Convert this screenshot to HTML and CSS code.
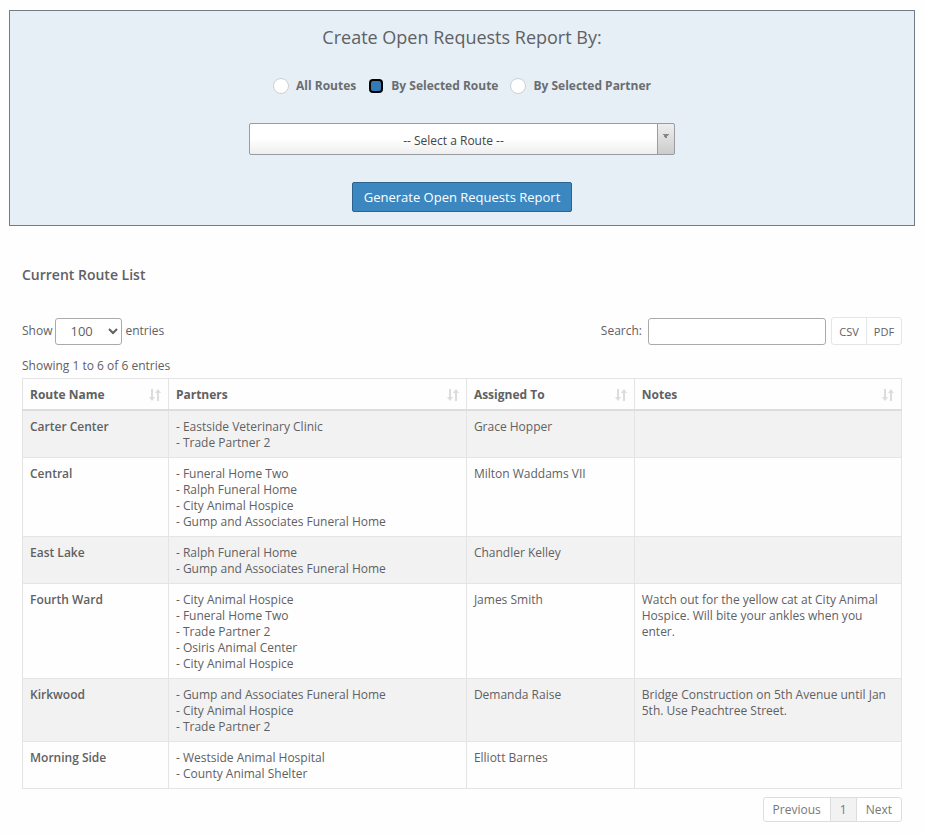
FILE: index.html
```html
<!DOCTYPE html>
<html lang="en">
<head>
  <meta charset="UTF-8" />
  <meta name="viewport" content="width=device-width, initial-scale=1.0"/>
  <title>Open Requests Report</title>
  <link rel="stylesheet" href="styles.css">
</head>
<body>

  <!-- sort arrows, reused in every column header -->
  <svg class="sprite" width="0" height="0" aria-hidden="true">
    <symbol id="sort" viewBox="0 0 12 14">
      <path d="M2 1h2v8h2L3 13L0 9h2zM8 13h2V5h2L9 1L6 5h2z"/>
    </symbol>
  </svg>

  <form class="report-box">
    <h1>Create Open Requests Report By:</h1>

    <div class="radio-row">
      <label><input type="radio" name="reportBy" value="all">All Routes</label>
      <label><input type="radio" name="reportBy" value="route" checked>By Selected Route</label>
      <label><input type="radio" name="reportBy" value="partner">By Selected Partner</label>
    </div>

    <select class="route-select" aria-label="Route">
      <option>-- Select a Route --</option>
      <option>Carter Center</option>
      <option>Central</option>
      <option>East Lake</option>
      <option>Fourth Ward</option>
      <option>Kirkwood</option>
      <option>Morning Side</option>
    </select>

    <button type="button" class="generate-btn">Generate Open Requests Report</button>
  </form>

  <div class="route-list">
    <h2>Current Route List</h2>

    <div class="toolbar">
      <label class="length">Show
        <select class="length-select">
          <option>10</option>
          <option>25</option>
          <option>50</option>
          <option selected>100</option>
        </select>
        entries
      </label>
      <div class="toolbar-right">
        <label class="search">Search: <input type="search"></label>
        <div class="export">
          <button type="button">CSV</button>
          <button type="button">PDF</button>
        </div>
      </div>
    </div>

    <div class="info">Showing 1 to 6 of 6 entries</div>

    <table>
      <colgroup>
        <col class="col-name">
        <col class="col-partners">
        <col class="col-assigned">
        <col class="col-notes">
      </colgroup>
      <thead>
        <tr>
          <th><div class="head">Route Name <svg class="sort"><use href="#sort"/></svg></div></th>
          <th><div class="head">Partners <svg class="sort"><use href="#sort"/></svg></div></th>
          <th><div class="head">Assigned To <svg class="sort"><use href="#sort"/></svg></div></th>
          <th><div class="head">Notes <svg class="sort"><use href="#sort"/></svg></div></th>
        </tr>
      </thead>
      <tbody>
        <tr>
          <td class="name">Carter Center</td>
          <td>- Eastside Veterinary Clinic<br>- Trade Partner 2</td>
          <td>Grace Hopper</td>
          <td></td>
        </tr>
        <tr>
          <td class="name">Central</td>
          <td>- Funeral Home Two<br>- Ralph Funeral Home<br>- City Animal Hospice<br>- Gump and Associates Funeral Home</td>
          <td>Milton Waddams VII</td>
          <td></td>
        </tr>
        <tr>
          <td class="name">East Lake</td>
          <td>- Ralph Funeral Home<br>- Gump and Associates Funeral Home</td>
          <td>Chandler Kelley</td>
          <td></td>
        </tr>
        <tr>
          <td class="name">Fourth Ward</td>
          <td>- City Animal Hospice<br>- Funeral Home Two<br>- Trade Partner 2<br>- Osiris Animal Center<br>- City Animal Hospice</td>
          <td>James Smith</td>
          <td>Watch out for the yellow cat at City Animal Hospice. Will bite your ankles when you enter.</td>
        </tr>
        <tr>
          <td class="name">Kirkwood</td>
          <td>- Gump and Associates Funeral Home<br>- City Animal Hospice<br>- Trade Partner 2</td>
          <td>Demanda Raise</td>
          <td>Bridge Construction on 5th Avenue until Jan 5th. Use Peachtree Street.</td>
        </tr>
        <tr>
          <td class="name">Morning Side</td>
          <td>- Westside Animal Hospital<br>- County Animal Shelter</td>
          <td>Elliott Barnes</td>
          <td></td>
        </tr>
      </tbody>
    </table>

    <div class="pagination">
      <button type="button">Previous</button>
      <button type="button" class="active">1</button>
      <button type="button">Next</button>
    </div>
  </div>

</body>
</html>
```

FILE: styles.css
```css
* {
  box-sizing: border-box;
}

body {
  margin: 0;
  padding: 10px 10px 12px 9px;
  font-family: "Open Sans", sans-serif;
  font-size: 12px;
  line-height: 16px;
  color: #5f6163;
  background: #fefefe;
}

button, input, select {
  font-family: inherit;
  font-size: 12px;
  color: inherit;
}

.sprite {
  display: block;
}

/* report form */
.report-box {
  display: flex;
  flex-direction: column;
  align-items: center;
  padding: 14px 20px 13px;
  background: #e6eff6;
  border: 1px solid #717b85;
}

h1 {
  margin: 0;
  font-size: 18px;
  font-weight: 400;
  line-height: 24px;
}

.radio-row {
  display: flex;
  gap: 12px;
  margin: 28px 0;
}

.radio-row label {
  display: flex;
  align-items: center;
  gap: 7px;
  line-height: 18px;
  font-weight: 700;
  color: #6b6d70;
}

.radio-row input {
  appearance: none;
  width: 16px;
  height: 16px;
  margin: 0;
  background: white;
  border: 1px solid #ccd0d4;
  border-radius: 50%;
}

.radio-row input:checked {
  width: 14px;
  height: 14px;
  margin: 0 1px;
  background: #337ab7;
  border: 2px solid #000;
  border-radius: 4px;
}

.route-select {
  appearance: none;
  width: 426px;
  max-width: 100%;
  height: 32px;
  padding: 2px 17px 0 0;
  text-align: center;
  text-align-last: center;
  color: #444;
  border: 1px solid #999ca0;
  border-radius: 2px;
  background:
    linear-gradient(to bottom left, #888 50%, transparent 50%) right 8px top 10px / 3px 5px no-repeat,
    linear-gradient(to bottom right, #888 50%, transparent 50%) right 5px top 10px / 3px 5px no-repeat,
    linear-gradient(#999ca0, #999ca0) right 16px top / 1px 100% no-repeat,
    linear-gradient(#eee, #ccc) right / 16px 100% no-repeat,
    linear-gradient(white 50%, #eee);
}

.generate-btn {
  height: 30px;
  margin-top: 27px;
  padding: 0 11px;
  font-size: 13px;
  color: white;
  background: #3c87c0;
  border: 1px solid #2a6390;
  border-radius: 2px;
}

/* route list */
.route-list {
  padding: 0 13px;
}

h2 {
  margin: 40px 0 33px;
  font-size: 14px;
  font-weight: 600;
  line-height: 18px;
}

.toolbar {
  display: flex;
  justify-content: space-between;
  align-items: center;
}

.toolbar-right {
  display: flex;
  align-items: center;
  gap: 5px;
}

.length, .search {
  display: flex;
  align-items: center;
}

.length {
  gap: 3px;
}

.search {
  gap: 6px;
}

.length-select, .search input {
  height: 27px;
  background: white;
  border: 1px solid #aaa;
  border-radius: 3px;
}

.length-select {
  width: 67px;
  padding: 0 0 0 10px;
  font-size: 13px;
}

.search input {
  width: 178px;
}

.export, .pagination {
  display: flex;
}

.export button, .pagination button {
  background: white;
  border: 1px solid #e3e5e6;
}

.export button {
  width: 36px;
  height: 28px;
  padding: 0;
  font-size: 11px;
}

.export button + button, .pagination button + button {
  margin-left: -1px;
}

.export button:first-child, .pagination button:first-child {
  border-radius: 3px 0 0 3px;
}

.export button:last-child, .pagination button:last-child {
  border-radius: 0 3px 3px 0;
}

.info {
  margin: 13px 0 4px;
}

table {
  width: 100%;
  table-layout: fixed;
  border-collapse: collapse;
}

.col-name {
  width: 16.6%;
}

.col-partners {
  width: 33.9%;
}

.col-assigned {
  width: 19.1%;
}

th, td {
  padding: 8px 7px 6px;
  text-align: left;
  vertical-align: top;
  border: 1px solid #e4e4e4;
}

th {
  font-weight: 700;
  border-bottom: 2px solid #ddd;
}

.head {
  display: flex;
  justify-content: space-between;
  align-items: center;
}

.sort {
  width: 12px;
  height: 14px;
  fill: #dcdcdc;
}

tbody tr:nth-child(odd) {
  background: #f2f2f2;
}

.name {
  font-weight: 600;
}

.pagination {
  justify-content: flex-end;
  margin-top: 8px;
}

.pagination button {
  height: 25px;
  padding: 0 9px;
  color: #777;
  border-color: #ddd;
}

.pagination .active {
  background: #f2f2f2;
}
```
